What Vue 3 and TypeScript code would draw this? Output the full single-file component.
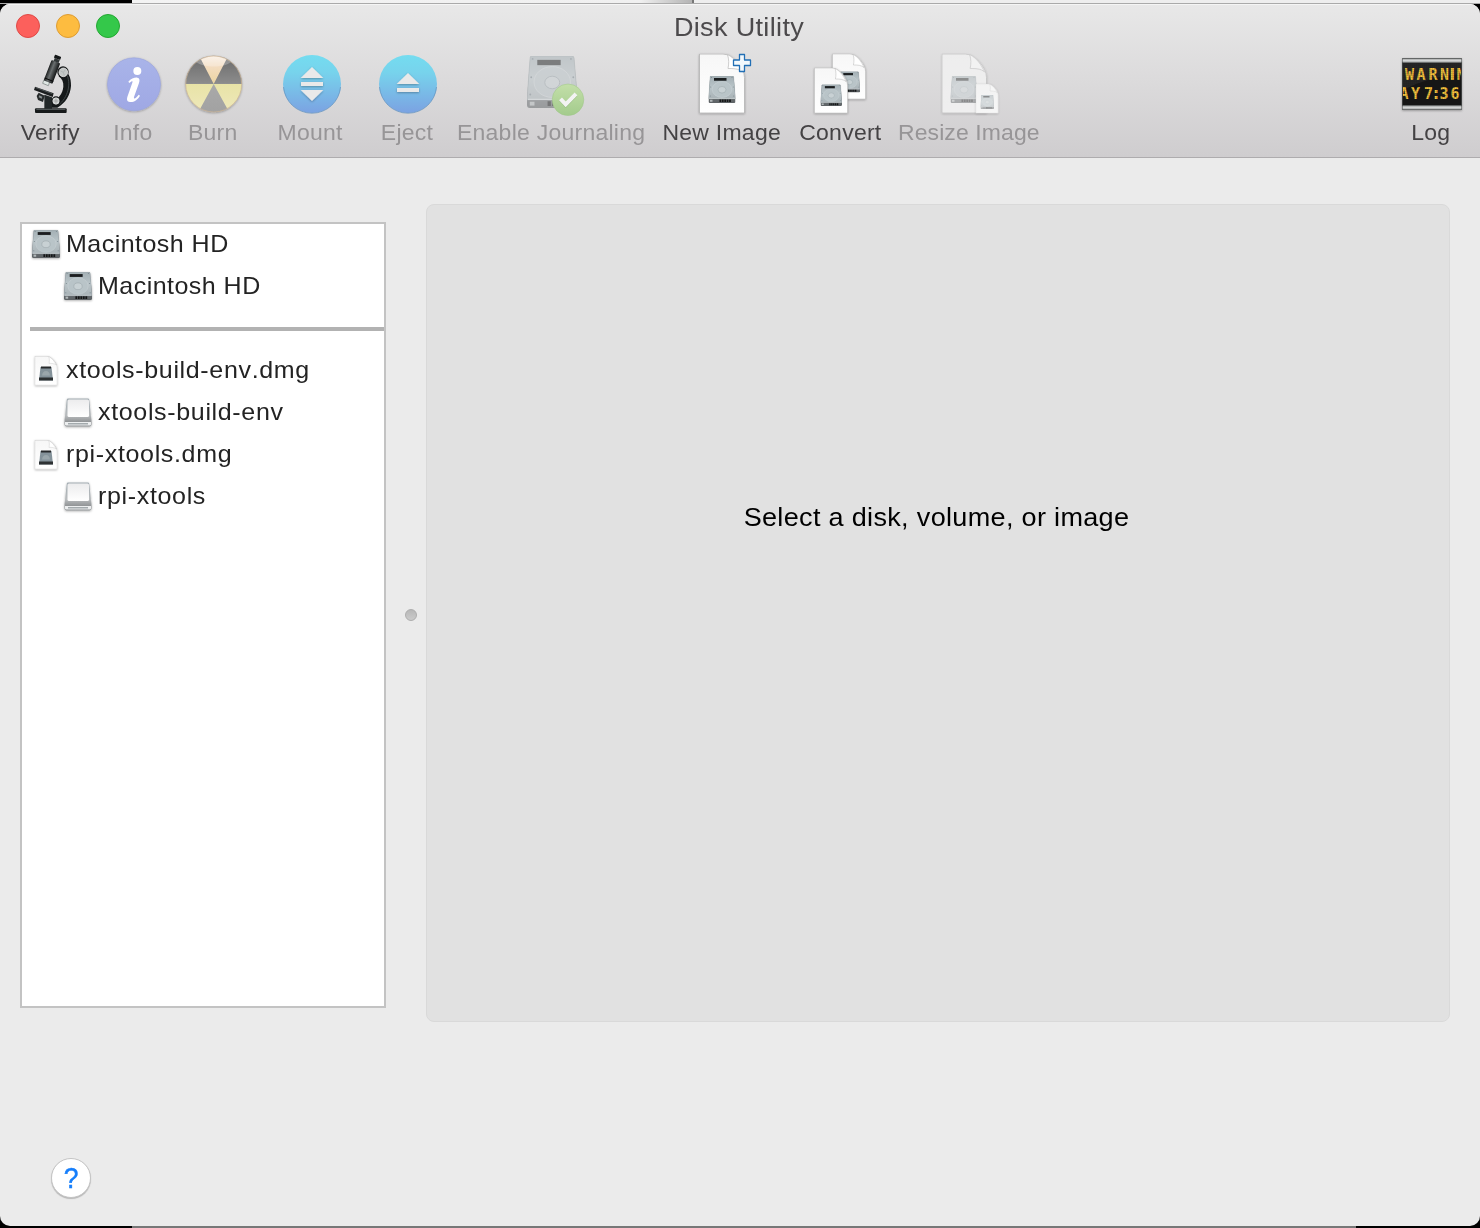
<script setup lang="ts">
interface Tool {
  id: string
  label: string
  width: number
  center: number
  enabled: boolean
}

interface Row {
  kind: 'hd' | 'volume' | 'dmg' | 'drive' | 'separator'
  label?: string
  nested?: boolean
}

const tools: Tool[] = [
  { id: 'verify', label: 'Verify', width: 76, center: 50, enabled: true },
  { id: 'info', label: 'Info', width: 90, center: 133, enabled: false },
  { id: 'burn', label: 'Burn', width: 70, center: 213, enabled: false },
  { id: 'mount', label: 'Mount', width: 124, center: 310, enabled: false },
  { id: 'eject', label: 'Eject', width: 70, center: 407, enabled: false },
  { id: 'journal', label: 'Enable Journaling', width: 218, center: 551, enabled: false },
  { id: 'new', label: 'New Image', width: 124, center: 722, enabled: true },
  { id: 'convert', label: 'Convert', width: 112, center: 840, enabled: true },
  { id: 'resize', label: 'Resize Image', width: 146, center: 969, enabled: false },
  { id: 'log', label: 'Log', width: 78, center: 1431, enabled: true },
]

const rows: Row[] = [
  { kind: 'hd', label: 'Macintosh HD' },
  { kind: 'volume', label: 'Macintosh HD', nested: true },
  { kind: 'separator' },
  { kind: 'dmg', label: 'xtools-build-env.dmg' },
  { kind: 'drive', label: 'xtools-build-env', nested: true },
  { kind: 'dmg', label: 'rpi-xtools.dmg' },
  { kind: 'drive', label: 'rpi-xtools', nested: true },
]

// Every toolbar drawing shares one coordinate space; the box picks its own slice.
const box = (t: Tool): string => `${t.center - 33} 52 66 66`
</script>

<template>
  <div class="desktop">
    <svg class="defs" width="0" height="0" aria-hidden="true">
      <defs>
        <linearGradient id="plate" x1="0" y1="0" x2="0" y2="1">
          <stop offset="0" stop-color="#a3afb4" />
          <stop offset=".5" stop-color="#bac5c9" />
          <stop offset="1" stop-color="#a9b3b7" />
        </linearGradient>
        <linearGradient id="front" x1="0" y1="0" x2="0" y2="1">
          <stop offset="0" stop-color="#8b9195" />
          <stop offset="1" stop-color="#5d6265" />
        </linearGradient>
        <linearGradient id="paper" x1="0" y1="0" x2="0" y2="1">
          <stop offset="0" stop-color="#f7f7f7" />
          <stop offset="1" stop-color="#ffffff" />
        </linearGradient>
        <linearGradient id="aqua" x1="0" y1="0" x2="0" y2="1">
          <stop offset="0" stop-color="#74dcf0" />
          <stop offset=".3" stop-color="#77d3ec" />
          <stop offset="1" stop-color="#7ba2e2" />
        </linearGradient>
        <linearGradient id="infoFill" x1="0" y1="0" x2="0" y2="1">
          <stop offset="0" stop-color="#a9b4e9" />
          <stop offset="1" stop-color="#9fa8e4" />
        </linearGradient>
        <linearGradient id="okFill" x1="0" y1="0" x2="0" y2="1">
          <stop offset="0" stop-color="#c3dfa9" />
          <stop offset="1" stop-color="#a3cb8c" />
        </linearGradient>
        <linearGradient id="burnDark" x1="0" y1="0" x2="0" y2="1">
          <stop offset="0" stop-color="#6a6a6a" />
          <stop offset=".49" stop-color="#8c8c8c" />
          <stop offset=".5" stop-color="#a9a9a9" />
          <stop offset="1" stop-color="#a2a2a2" />
        </linearGradient>
        <linearGradient id="burnLight" x1="0" y1="0" x2="0" y2="1">
          <stop offset="0" stop-color="#f9efe5" />
          <stop offset=".2" stop-color="#f3dcc0" />
          <stop offset=".49" stop-color="#ecd5a2" />
          <stop offset=".5" stop-color="#e8e3a6" />
          <stop offset="1" stop-color="#eee8bb" />
        </linearGradient>
        <linearGradient id="metal" x1="0" y1="0" x2="1" y2="0">
          <stop offset="0" stop-color="#1c1f20" />
          <stop offset=".4" stop-color="#6b7071" />
          <stop offset="1" stop-color="#111314" />
        </linearGradient>
        <linearGradient id="silver" x1="0" y1="0" x2="0" y2="1">
          <stop offset="0" stop-color="#8d9090" />
          <stop offset=".45" stop-color="#d8dada" />
          <stop offset="1" stop-color="#a0a3a3" />
        </linearGradient>
        <linearGradient id="driveTop" x1="0" y1="0" x2="0" y2="1">
          <stop offset="0" stop-color="#ececed" />
          <stop offset="1" stop-color="#ffffff" />
        </linearGradient>
        <linearGradient id="driveSide" x1="0" y1="0" x2="0" y2="1">
          <stop offset="0" stop-color="#a2acb2" />
          <stop offset=".6" stop-color="#b9bcbe" />
          <stop offset=".85" stop-color="#8f9294" />
          <stop offset="1" stop-color="#8c9092" />
        </linearGradient>
        <pattern id="led" x="1404" y="65" width="2" height="2" patternUnits="userSpaceOnUse">
          <path d="M0 0H2M0 0V2" stroke="#151515" stroke-width=".8" fill="none" />
        </pattern>
        <clipPath id="screen"><rect x="1403" y="63" width="58" height="42" /></clipPath>
        <filter id="soft" x="-20%" y="-20%" width="140%" height="150%">
          <feDropShadow dx="0" dy=".8" stdDeviation=".8" flood-color="#000" flood-opacity=".32" />
        </filter>
        <symbol id="disk" viewBox="0 0 54 54" preserveAspectRatio="none">
          <path d="M5 0H48Q50 0 50.300 2L54 44V51Q54 54 51 54H3Q0 54 0 51V44L3.300 2Q3.500 0 5 0Z" fill="url(#front)" />
          <path d="M5 0H48Q50 0 50.300 2L54 45.500H0L3.300 2Q3.500 0 5 0Z" fill="url(#plate)" stroke="#8f9ba0" stroke-width=".6" />
          <path d="M1 45H53" stroke="#d3dadc" stroke-width="1.300" />
          <ellipse cx="27" cy="27" rx="19.500" ry="16" fill="#b9c4c8" stroke="#cad3d6" stroke-width="1" />
          <ellipse cx="27" cy="27.500" rx="8" ry="6.500" fill="#c8d1d4" stroke="#929ea3" stroke-width=".9" />
          <rect x="11" y="4" width="25" height="5.500" fill="#1b1f20" />
          <g fill="#76838a">
            <circle cx="6" cy="3" r="1" /><circle cx="47" cy="3" r="1" />
            <circle cx="4.500" cy="22" r="1" /><circle cx="49.500" cy="22" r="1" />
            <circle cx="3.500" cy="40" r="1" /><circle cx="50.500" cy="40" r="1" />
          </g>
          <rect x="3" y="47.500" width="5" height="4" fill="#b2b8ba" />
          <path d="M22 49.500H45" stroke="#151718" stroke-width="5" stroke-dasharray="3.500 1.300" />
        </symbol>
        <symbol id="sheet" viewBox="0 0 46 60" preserveAspectRatio="none">
          <path d="M.5 .5H24C33 .500 45.500 13 45.500 24V59.500H.500Z" fill="url(#paper)" stroke="#b3b3b3" stroke-width=".8" />
          <path d="M28.500 1C30 6 30 10 29 15C34 15 40 15 43.500 18.500C40 11 36 5 28.500 1Z" fill="#fff" stroke="#c2c2c2" stroke-width=".8" />
        </symbol>
      </defs>
    </svg>

    <div class="edge top"></div>

    <div class="window">
      <header class="toolbar">
        <div class="titlebar">
          <div class="lights">
            <span class="light red"></span>
            <span class="light amber"></span>
            <span class="light green"></span>
          </div>
          <h1 class="title">Disk Utility</h1>
        </div>

        <div class="tools">
          <div
            v-for="t in tools"
            :key="t.id"
            class="tool"
            :class="[t.id, { off: !t.enabled }]"
            :style="{ width: t.width + 'px' }"
          >
            <svg class="icon" width="66" height="66" :viewBox="box(t)">
              <g v-if="t.id === 'verify'" transform="scale(.33333)">
                <path d="M183 206C205 212 214 232 213 258C211 285 197 309 172 323H142L153 304C175 300 188 280 190 260C191 246 186 236 176 229Z" fill="#15191a" />
                <path d="M198 219C212 242 210 285 178 313" fill="none" stroke="#404748" stroke-width="3" />
                <rect x="105" y="325" width="95" height="14" rx="3" fill="#171a1b" />
                <path d="M109 328H196" stroke="#596061" stroke-width="3" />
                <path d="M133 284L156 292V326H133Z" fill="#222728" />
                <path d="M105 260L161 280L158 291L102 270Z" fill="#1b1e1f" />
                <path d="M107 263L157 281" stroke="#646b6c" stroke-width="2" />
                <path d="M116 278L110 288L114 300L129 306L134 287Z" fill="#25292a" />
                <path d="M118 286L127 290L125 296L116 292Z" fill="#858b8c" />
                <path d="M132 239L149 246L145 257L128 250Z" fill="#dfe7e4" stroke="#6f7776" stroke-width="2" />
                <g transform="rotate(21 154 215)">
                  <rect x="142" y="182" width="28" height="66" rx="3" fill="url(#metal)" />
                  <rect x="149" y="173" width="16" height="10" fill="#303536" />
                  <rect x="146" y="163" width="20" height="10" rx="2" fill="#151819" />
                  <path d="M142 240H170" stroke="#080909" stroke-width="3" />
                </g>
                <circle cx="189" cy="216" r="17" fill="#171a1b" />
                <circle cx="190" cy="217" r="13" fill="#c3c7c6" stroke="#f2f2f2" stroke-width="2" />
                <path d="M182 213L190 217L196 209M190 217L193 226" stroke="#a8adad" stroke-width="2" fill="none" />
                <circle cx="168" cy="303" r="14" fill="#171a1b" />
                <circle cx="168" cy="303" r="9.500" fill="#cbcfce" stroke="#f2f2f2" stroke-width="2" />
                <path d="M160 303H176M168 295V311" stroke="#999" stroke-width="2" />
              </g>

              <g v-else-if="t.id === 'info'">
                <circle cx="134" cy="84.300" r="26.500" fill="url(#infoFill)" stroke="#98a2dc" stroke-width=".6" filter="url(#soft)" />
                <g transform="scale(.33333)" fill="#fff">
                  <circle cx="412" cy="213" r="12" />
                  <path d="M385 245C393 236 404 232 412 233C419 234 420 240 417 249L402 291C401 296 404 297 408 293C411 290 414 287 416 284L420 287C412 300 400 308 390 306C381 305 379 299 383 288L397 248C399 242 396 242 388 249Z" />
                </g>
              </g>

              <g v-else-if="t.id === 'burn'">
                <circle cx="213.700" cy="84" r="28.300" fill="url(#burnDark)" filter="url(#soft)" />
                <clipPath id="disc"><circle cx="213.700" cy="84" r="28.200" /></clipPath>
                <path
                  d="M213.700 84L198.700 55H228.700ZM213.700 84H185V98L199.500 110ZM213.700 84H243V98L228 110Z M184 55h.1M184 112h.1"
                  fill="url(#burnLight)"
                  clip-path="url(#disc)"
                />
                <path d="M196 62C204 54 223 54 231 62C224 68 204 68 196 62Z" fill="#fff" opacity=".25" />
                <circle cx="213.700" cy="84" r="28" fill="none" stroke="#cdb596" stroke-width=".7" />
              </g>

              <g v-else-if="t.id === 'mount'">
                <circle cx="312" cy="84" r="29" fill="url(#aqua)" />
                <path d="M283.500 87A28.600 28.600 0 0 0 340.500 87" fill="none" stroke="#6292bd" stroke-width=".9" opacity=".8" />
                <g fill="#e9e9e9" filter="url(#soft)">
                  <path d="M312 67L323.300 78H300.700Z" />
                  <path d="M301 82H323V86H301Z" />
                  <path d="M300.700 90H323.300L312 101Z" />
                </g>
              </g>

              <g v-else-if="t.id === 'eject'">
                <circle cx="408" cy="84" r="29" fill="url(#aqua)" />
                <path d="M379.500 87A28.600 28.600 0 0 0 436.500 87" fill="none" stroke="#6292bd" stroke-width=".9" opacity=".8" />
                <g fill="#e9e9e9" filter="url(#soft)">
                  <path d="M408 73L419.300 84H396.700Z" />
                  <path d="M397 88H419V92H397Z" />
                </g>
              </g>

              <g v-else-if="t.id === 'journal'">
                <use href="#disk" x="527" y="56" width="50.500" height="52" opacity=".5" />
                <circle cx="568" cy="99.800" r="15.800" fill="url(#okFill)" stroke="#9fc488" stroke-width=".5" />
                <path d="M560.500 99.500L565.700 105L576 94.500" fill="none" stroke="#779d66" stroke-width="4" opacity=".4" />
                <path d="M560.500 98.800L565.700 104.300L576 93.800" fill="none" stroke="#f3f3f3" stroke-width="4" />
              </g>

              <g v-else-if="t.id === 'new'">
                <use href="#sheet" x="699" y="53.500" width="46" height="60" filter="url(#soft)" />
                <use href="#disk" x="708.500" y="76" width="27" height="27" />
                <path d="M739.500 54.500H744.500V60H750.500V65.500H744.500V71.500H739.500V65.500H733.500V60H739.500Z" fill="#f2f8fc" stroke="#226fb5" stroke-width="1.300" stroke-linejoin="round" />
              </g>

              <g v-else-if="t.id === 'convert'">
                <use href="#sheet" x="832" y="53.500" width="34" height="46" filter="url(#soft)" />
                <use href="#disk" x="839" y="71.500" width="21" height="21" />
                <use href="#sheet" x="814" y="67.500" width="34" height="46" filter="url(#soft)" />
                <use href="#disk" x="820.500" y="84.500" width="21.500" height="21.500" />
              </g>

              <g v-else-if="t.id === 'resize'">
                <g opacity=".62">
                  <use href="#sheet" x="941.500" y="53.500" width="45.500" height="60" filter="url(#soft)" />
                  <use href="#disk" x="950.500" y="76" width="27" height="27" opacity=".7" />
                </g>
                <path d="M976 84H988.500C993 85 998.500 91 998.500 96V113H976Z" fill="#ececec" />
                <g opacity=".6">
                  <use href="#sheet" x="975.500" y="83.500" width="23" height="30" filter="url(#soft)" />
                  <use href="#disk" x="980.500" y="95" width="13.500" height="14" opacity=".8" />
                </g>
              </g>

              <g v-else>
                <rect x="1402" y="58" width="60" height="52" rx="1" fill="#3b3d3d" filter="url(#soft)" />
                <rect x="1402.500" y="58.500" width="59" height="4" fill="url(#silver)" />
                <rect x="1402.500" y="105.500" width="59" height="4" fill="url(#silver)" />
                <rect x="1403" y="63" width="58" height="42" fill="#161616" />
                <g clip-path="url(#screen)">
                  <path d="M1403 63H1461V74Q1430 76 1403 90Z" fill="#333" opacity=".55" />
                  <g class="led-text">
                    <text x="1405 1416.500 1428.500 1440 1449.500 1456.500" y="80">WARN<tspan class="thin">I</tspan>N</text>
                    <text x="1399.500 1411 1420 1424 1433 1439.500 1450.500" y="99">AY 7<tspan class="thin">:</tspan>36</text>
                  </g>
                  <rect x="1403" y="63" width="58" height="42" fill="url(#led)" opacity=".35" />
                </g>
              </g>
            </svg>
            <span class="label">{{ t.label }}</span>
          </div>
        </div>
      </header>

      <main class="content">
        <aside class="sidebar">
          <template v-for="(r, i) in rows" :key="i">
            <div v-if="r.kind === 'separator'" class="row"><span class="rule"></span></div>
            <div v-else class="row" :class="[r.kind, { nested: r.nested }]">
              <svg class="glyph" width="32" height="32" viewBox="0 0 32 32">
                <use v-if="r.kind === 'hd' || r.kind === 'volume'" href="#disk" x="2" y="1" width="28" height="28" filter="url(#soft)" />
                <template v-else-if="r.kind === 'dmg'">
                  <use href="#sheet" x="4.500" y="1" width="23" height="29.500" filter="url(#soft)" />
                  <path d="M10.500 12H21.500L23 25.500H9Z" fill="#84929a" />
                  <path d="M11 11.500H21V13.500H11Z" fill="#26292b" />
                  <path d="M9 22.500H23V25.500H9Z" fill="#2d3133" />
                  <path d="M12 20.500Q12.500 16 16 16Q19.500 16 20 20.500Z" fill="#9aa6ab" />
                </template>
                <template v-else>
                  <path d="M5 2Q5 1.500 6 1.500H26Q27 1.500 27.200 2.500L29.500 23V27.500Q29.500 29.500 27.500 29.500H4.500Q2.500 29.500 2.500 27.500V23L4.800 2.500Z" fill="url(#driveSide)" filter="url(#soft)" />
                  <rect x="5.500" y="2.500" width="21.500" height="17.500" rx="1.500" fill="url(#driveTop)" />
                  <path d="M3 25H29V27.500Q29 28.500 28 28.500H4Q3 28.500 3 27.500Z" fill="#eceeef" />
                  <path d="M6 26.800H26" stroke="#92999d" stroke-width="1.200" />
                </template>
              </svg>
              <span class="name">{{ r.label }}</span>
            </div>
          </template>
        </aside>

        <div class="splitter"><span class="grip"></span></div>

        <section class="panel"><p class="hint">Select a disk, volume, or image</p></section>
      </main>

      <footer class="footer">
        <button class="help" type="button"><span class="mark">?</span></button>
      </footer>
    </div>

    <div class="edge bottom"></div>
  </div>
</template>

<style>
body {
  background: #000;
}
</style>

<style scoped>
.desktop {
  width: 1480px;
  height: 1228px;
  display: flex;
  flex-direction: column;
  overflow: hidden;
  background: #000;
  font-family: 'Liberation Sans', Arial, sans-serif;
}
.defs {
  position: absolute;
}
.edge {
  flex: none;
}
.edge.top {
  height: 4px;
  background: linear-gradient(90deg, #000 132px, #f3f3f3 132px, #f0f0f0 640px, #b4b4b4 692px, #777 692px, #777 694px, #eee 694px);
  box-shadow: inset 0 -1px #aaa;
}
.edge.bottom {
  height: 2px;
  background: linear-gradient(90deg, #000 132px, #777 132px, #777 1356px, #000 1356px);
}
.window {
  flex: 1;
  min-height: 0;
  display: flex;
  flex-direction: column;
  border-radius: 10px;
  overflow: hidden;
  background: #ebebeb;
}
.toolbar {
  flex: none;
  box-sizing: border-box;
  height: 154px;
  border-bottom: 1px solid #aeacae;
  background: linear-gradient(#e8e8e8, #cfcdcf);
  box-shadow: inset 0 1px #f5f5f5;
}
.titlebar {
  display: grid;
  grid-template-columns: 199px 1fr 201px;
  height: 48px;
}
.lights {
  display: flex;
  gap: 16px;
  padding: 10px 0 0 16px;
}
.light {
  box-sizing: border-box;
  width: 24px;
  height: 24px;
  border-radius: 50%;
  border: 1px solid;
}
.red {
  background: #fc605c;
  border-color: #de4a46;
}
.amber {
  background: #fdbc40;
  border-color: #dd9c33;
}
.green {
  background: #34c84a;
  border-color: #24a732;
}
.title {
  margin: 8px 0 0;
  text-align: center;
  font-size: 26px;
  font-weight: 400;
  line-height: 30px;
  letter-spacing: 0.32px;
  transform: scaleX(1.04);
  color: #4c4a4c;
}
.tools {
  display: flex;
  padding: 0 10px 0 12px;
}
.tool {
  flex: none;
  display: flex;
  flex-direction: column;
  align-items: center;
}
.tool.log {
  margin-left: auto;
}
.icon {
  display: block;
  overflow: visible;
}
.label {
  margin-top: 2px;
  font-size: 22px;
  line-height: 26px;
  letter-spacing: 0.24px;
  white-space: nowrap;
  transform: scaleX(1.045);
  color: #444244;
}
.resize .label {
  letter-spacing: 0.1px;
}
.off .label {
  color: #979597;
}
.led-text {
  font-family: 'DejaVu Sans Mono', monospace;
  font-size: 15px;
  font-weight: 700;
  fill: #f7c43d;
}
.thin {
  font-family: 'DejaVu Sans', sans-serif;
}
.content {
  display: flex;
  align-items: flex-start;
  height: 864px;
  padding: 46px 30px 0 20px;
  box-sizing: border-box;
}
.sidebar {
  box-sizing: border-box;
  width: 366px;
  height: 786px;
  margin-top: 18px;
  border: 2px solid #c3c3c3;
  background: #fff;
}
.row {
  height: 42px;
  display: flex;
  align-items: center;
  padding-left: 8px;
}
.row.nested {
  padding-left: 40px;
}
.rule {
  flex: 1;
  height: 4px;
  background: #b2b2b2;
}
.glyph {
  flex: none;
  overflow: visible;
}
.name {
  margin: -3px 0 0 3.5px;
  font-size: 24px;
  font-kerning: none;
  line-height: 42px;
  letter-spacing: 0.45px;
  white-space: nowrap;
  transform: scaleX(1.042);
  transform-origin: 0 50%;
  color: #232323;
}
.dmg .name,
.drive .name {
  letter-spacing: 0.63px;
}
.splitter {
  flex: none;
  width: 40px;
  height: 818px;
  display: flex;
  justify-content: center;
  align-items: center;
}
.grip {
  box-sizing: border-box;
  width: 12px;
  height: 12px;
  margin: 4px 0 0 10px;
  border-radius: 50%;
  border: 1px solid #adadad;
  background: linear-gradient(#b8b8b8, #cbcbcb);
}
.panel {
  flex: 1;
  box-sizing: border-box;
  height: 818px;
  border: 1px solid #d9d9d9;
  border-radius: 8px;
  background: #e1e1e1;
}
.hint {
  margin: 297px 3px 0 0;
  text-align: center;
  font-size: 26px;
  line-height: 30px;
  letter-spacing: 0.31px;
  transform: scaleX(1.04);
  color: #000;
}
.footer {
  padding: 136px 0 0 51px;
}
.help {
  display: block;
  box-sizing: border-box;
  width: 40px;
  height: 40px;
  padding: 0;
  border: 1px solid #c4c4c4;
  border-radius: 50%;
  background: #fff;
  box-shadow: 0 1px 1px rgba(0, 0, 0, 0.22);
  font-family: 'Liberation Sans', Arial, sans-serif;
  font-size: 30px;
  line-height: 38px;
  text-align: center;
  color: #157efb;
  -webkit-text-stroke: 0.5px #157efb;
}
.mark {
  display: block;
  transform: scaleX(0.88);
}
</style>
